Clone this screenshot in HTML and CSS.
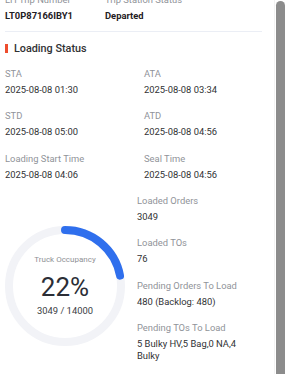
FILE: index.html
```html
<!DOCTYPE html>
<html lang="en">
<head>
<meta charset="utf-8">
<title>Loading Status</title>
<link rel="stylesheet" href="styles.css">
</head>
<body>
<div class="page">
  <main class="panel">
    <div class="trip">
      <div class="field trip-no">
        <div class="label">LH Trip Number</div>
        <div class="value strong">LT0P87166IBY1</div>
      </div>
      <div class="field">
        <div class="label">Trip Station Status</div>
        <div class="value strong">Departed</div>
      </div>
    </div>
    <hr class="divider">
    <h2 class="title"><span class="title-bar"></span>Loading Status</h2>
    <div class="times">
      <div class="field"><div class="label">STA</div><div class="value">2025-08-08 01:30</div></div>
      <div class="field"><div class="label">ATA</div><div class="value">2025-08-08 03:34</div></div>
      <div class="field"><div class="label">STD</div><div class="value">2025-08-08 05:00</div></div>
      <div class="field"><div class="label">ATD</div><div class="value">2025-08-08 04:56</div></div>
      <div class="field"><div class="label">Loading Start Time</div><div class="value">2025-08-08 04:06</div></div>
      <div class="field"><div class="label">Seal Time</div><div class="value">2025-08-08 04:56</div></div>
    </div>
    <div class="summary">
      <div class="gauge-col">
        <div class="gauge">
          <svg class="ring" width="120" height="120" viewBox="0 0 120 120">
            <circle cx="60" cy="60" r="56" fill="none" stroke="#f2f3f7" stroke-width="8"/>
            <circle cx="60" cy="60" r="56" fill="none" stroke="#2f6fed" stroke-width="8" stroke-linecap="round" stroke-dasharray="77.4 351.9" transform="rotate(-90 60 60)"/>
          </svg>
          <div class="gauge-text">
            <div class="gauge-label">Truck Occupancy</div>
            <div class="gauge-pct">22%</div>
            <div class="gauge-count">3049 / 14000</div>
          </div>
        </div>
      </div>
      <div class="stats">
        <div class="field"><div class="label">Loaded Orders</div><div class="value">3049</div></div>
        <div class="field"><div class="label">Loaded TOs</div><div class="value">76</div></div>
        <div class="field"><div class="label">Pending Orders To Load</div><div class="value">480 (Backlog: 480)</div></div>
        <div class="field"><div class="label">Pending TOs To Load</div><div class="value">5 Bulky HV,5 Bag,0 NA,4 Bulky</div></div>
      </div>
    </div>
  </main>
  <div class="scrollbar"><div class="thumb"></div></div>
</div>
</body>
</html>
```
FILE: styles.css
```css
* { box-sizing: border-box; }
html, body {
  margin: 0;
  height: 100%;
  overflow: hidden;
  background: #ffffff;
}
body {
  font-family: Roboto, "Liberation Sans", Arial, sans-serif;
  font-size: 9.4px;
  line-height: 11.7px;
  color: #303133;
}
.page {
  display: flex;
  height: 374px;
  overflow: hidden;
}
.panel {
  flex: 1;
  min-width: 0;
  padding: 0 12px 0 5px;
}
.field { display: flex; flex-direction: column; gap: 4.3px; }
.label { color: #909399; white-space: nowrap; }
.value { color: #303133; }
.strong { font-weight: 700; color: #1f2024; }

.trip {
  display: flex;
  margin-top: -5.7px;
}
.trip-no { width: 100px; }

.divider {
  border: 0;
  border-top: 1px solid #ebeef5;
  height: 0;
  margin: 9px 0 0;
}

.title {
  display: flex;
  align-items: center;
  gap: 6px;
  margin: 9.5px 0 0;
  font-size: 10.8px;
  line-height: 13px;
  font-weight: 500;
  color: #303133;
}
.title-bar {
  width: 3px;
  height: 9px;
  background: #ee4d2d;
}

.times {
  display: grid;
  grid-template-columns: 139px 1fr;
  row-gap: 14.9px;
  margin-top: 13.1px;
}

.summary {
  display: flex;
  margin-top: 14px;
}
.gauge-col {
  width: 132px;
  flex: 0 0 132px;
}
.gauge {
  display: grid;
  width: 120px;
  height: 120px;
  margin-top: 31.5px;
}
.ring, .gauge-text { grid-area: 1 / 1; }
.gauge-text {
  display: flex;
  flex-direction: column;
  align-items: center;
  justify-content: center;
}
.gauge-label {
  font-size: 8px;
  line-height: 10px;
  color: #8f9196;
}
.gauge-pct {
  margin-top: 7.6px;
  font-size: 26px;
  line-height: 28px;
  color: #2b2e36;
}
.gauge-count {
  margin-top: 4px;
  color: #3a3d44;
}

.stats {
  width: 118px;
  display: flex;
  flex-direction: column;
  gap: 14.9px;
}

.scrollbar {
  flex: 0 0 14px;
  border-left: 1px solid #f3f3f3;
  padding: 1px 3px 0 1px;
}
.thumb {
  width: 9px;
  height: 373px;
  border-radius: 4.5px 4.5px 0 0;
  background: #8c8c8c;
}
```
